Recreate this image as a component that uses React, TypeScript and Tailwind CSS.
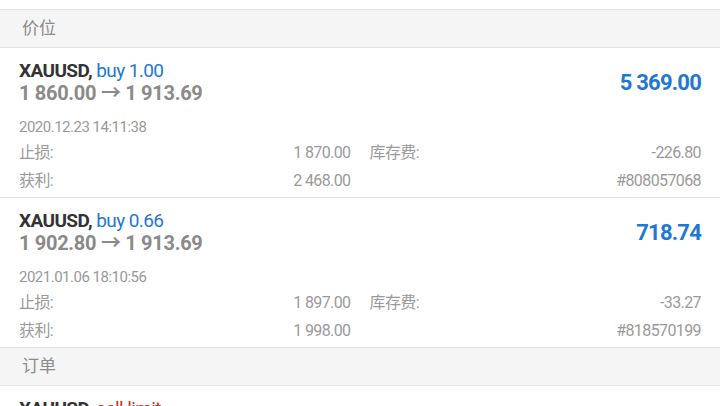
const positions = [
  {
    symbol: 'XAUUSD,',
    side: 'buy 1.00',
    prices: '1 860.00 → 1 913.69',
    profit: '5 369.00',
    time: '2020.12.23 14:11:38',
    sl: '1 870.00',
    tp: '2 468.00',
    swap: '-226.80',
    ticket: '#808057068',
  },
  {
    symbol: 'XAUUSD,',
    side: 'buy 0.66',
    prices: '1 902.80 → 1 913.69',
    profit: '718.74',
    time: '2021.01.06 18:10:56',
    sl: '1 897.00',
    tp: '1 998.00',
    swap: '-33.27',
    ticket: '#818570199',
  },
];

type Position = (typeof positions)[number];

const font = { fontFamily: 'Roboto, "Noto Sans CJK SC", sans-serif' };

const SectionHeader = ({ title }: { title: string }) => (
  <div className="h-[39px] flex items-center px-[22px] bg-[#f5f5f5] border-y border-[#e3e3e3] text-[17px] text-[#8c8c8c]">
    {title}
  </div>
);

const PositionRow = ({ p }: { p: Position }) => (
  <div className="px-[19px] pt-[11px] pb-[2px] bg-white">
    <div className="flex items-center justify-between">
      <div>
        <div className="text-[19px] leading-[23px] font-bold text-[#333333] tracking-[-0.6px]">
          {p.symbol} <span className="font-normal text-[#1f78d1]">{p.side}</span>
        </div>
        <div className="text-[20px] leading-[23px] font-bold text-[#8a8a8a] tracking-[-0.3px]">{p.prices}</div>
      </div>
      <div className="text-[22px] font-bold text-[#1f78d1] tracking-[-0.8px]">{p.profit}</div>
    </div>
    <div className="mt-[13px] text-[15px] leading-[18px] text-[#999999] tracking-[-0.5px]">{p.time}</div>
    <div className="mt-[3px] grid grid-cols-2 gap-x-[19px] text-[16px] leading-[28px] text-[#9a9a9a] tracking-[-0.6px]">
      <div className="flex justify-between">
        <span>止损:</span>
        <span>{p.sl}</span>
      </div>
      <div className="flex justify-between">
        <span>库存费:</span>
        <span>{p.swap}</span>
      </div>
      <div className="flex justify-between">
        <span>获利:</span>
        <span>{p.tp}</span>
      </div>
      <div className="flex justify-end">
        <span>{p.ticket}</span>
      </div>
    </div>
  </div>
);

export default function App() {
  return (
    <div className="w-[720px] h-[406px] overflow-hidden bg-white" style={font}>
      <div className="h-[9px] bg-white" />
      <SectionHeader title="价位" />
      <PositionRow p={positions[0]} />
      <div className="border-t border-[#e3e3e3]" />
      <PositionRow p={positions[1]} />
      <SectionHeader title="订单" />
      <div className="px-[19px] pt-[11px] text-[19px] leading-[23px] font-bold text-[#333333] tracking-[-0.6px]">
        XAUUSD, <span className="font-normal text-[#d0312d]">sell limit</span>
      </div>
    </div>
  );
}
